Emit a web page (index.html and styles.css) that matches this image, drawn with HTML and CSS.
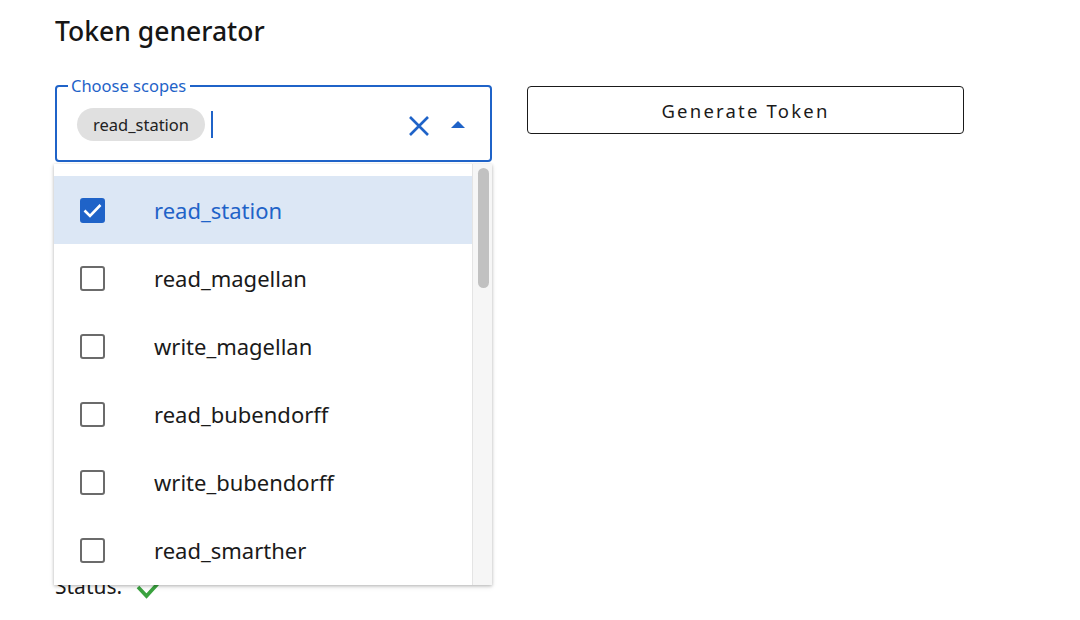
FILE: index.html
```html
<!DOCTYPE html>
<html>
<head>
<meta charset="utf-8">
<link rel="stylesheet" href="styles.css">
</head>
<body>
<div class="page">
  <h1 class="title">Token generator</h1>
  <div class="controls">
    <div class="select">
      <fieldset class="field">
        <legend class="legend">Choose scopes</legend>
        <div class="field-row">
          <span class="chip">read_station</span>
          <span class="caret"></span>
          <span class="spacer"></span>
          <svg class="clear" width="22" height="22" viewBox="0 0 22 22"><path d="M2 2 L20 20 M20 2 L2 20" stroke="#1f63c8" stroke-width="2.6" fill="none"/></svg>
          <svg class="arrow" width="14" height="8" viewBox="0 0 14 8"><path d="M0 7 L7 0 L14 7 Z" fill="#1f63c8"/></svg>
        </div>
      </fieldset>
      <div class="menu">
        <ul class="options">
          <li class="option selected"><span class="box checked"><svg width="25" height="25" viewBox="0 0 25 25"><path d="M4.5 12.5 L10 18 L20.5 7" stroke="#fff" stroke-width="2.6" fill="none"/></svg></span><span class="opt-text">read_station</span></li>
          <li class="option"><span class="box"></span><span class="opt-text">read_magellan</span></li>
          <li class="option"><span class="box"></span><span class="opt-text">write_magellan</span></li>
          <li class="option"><span class="box"></span><span class="opt-text">read_bubendorff</span></li>
          <li class="option"><span class="box"></span><span class="opt-text">write_bubendorff</span></li>
          <li class="option"><span class="box"></span><span class="opt-text">read_smarther</span></li>
        </ul>
        <div class="scrollbar"><div class="thumb"></div></div>
      </div>
    </div>
    <button class="generate">Generate Token</button>
  </div>
  <div class="status">
    <span>Status:</span>
    <svg width="28" height="24" viewBox="0 0 28 24"><path d="M2 11 L10.5 20 L26 3" stroke="#3aa33f" stroke-width="3.6" fill="none"/></svg>
  </div>
</div>
</body>
</html>
```

FILE: styles.css
```css
* { box-sizing: border-box; }
html, body { margin: 0; background: #fff; }
body { font-family: "Noto Sans", "Open Sans", sans-serif; color: #1a1a1a; }
.page { padding: 13px 0 0 55px; }
.title {
  margin: 0;
  font-family: "Noto Sans", sans-serif;
  font-weight: 500;
  font-size: 26.5px;
  line-height: 36px;
  color: #161616;
}
.controls {
  display: flex;
  align-items: flex-start;
  gap: 35px;
  margin-top: 37px;
}
.select { position: relative; width: 437px; }
.field {
  margin: 0;
  padding: 0 22px 0 20px;
  border: 2px solid #1f63c8;
  border-radius: 4px;
  height: 85px;
  margin-top: -9px;
}
.legend {
  margin-left: -9px;
  padding: 0 4px 0 3px;
  font-size: 16.5px;
  line-height: 18px;
  color: #1f63c8;
}
.field-row {
  display: flex;
  align-items: center;
  height: 58px;
}
.chip {
  display: inline-flex;
  align-items: center;
  height: 33px;
  padding: 0 16px;
  background: #e0e0e0;
  border-radius: 17px;
  font-size: 16.5px;
  color: #222;
}
.caret {
  width: 2px;
  height: 27px;
  background: #1f63c8;
  margin-left: 6px;
}
.spacer { flex: 1; }
.clear { margin-right: 21px; margin-top: 3px; }
.arrow { margin-right: 3px; margin-top: 1px; }
.menu {
  position: absolute;
  left: -1px;
  top: 78px;
  width: 438px;
  height: 421px;
  background: #fff;
  box-shadow: 0 1px 3px rgba(0,0,0,0.25), 0 2px 6px rgba(0,0,0,0.08);
  display: flex;
  overflow: hidden;
}
.options {
  list-style: none;
  margin: 0;
  padding: 12px 0 0 0;
  flex: 1;
}
.option {
  display: flex;
  align-items: center;
  height: 68px;
  padding-left: 26px;
  font-size: 22px;
  color: #1a1a1a;
}
.option.selected { background: #dce7f5; color: #1f63c8; }
.box {
  width: 25px;
  height: 25px;
  border: 2px solid #6b6b6b;
  border-radius: 3px;
  margin-right: 49px;
  flex: none;
  display: flex;
}
.box.checked { background: #1f63c8; border-color: #1f63c8; }
.box svg { margin: -2px; }
.scrollbar {
  width: 20px;
  background: #f6f6f6;
  border-left: 1px solid #e4e4e4;
  padding: 4px 3px 0 5px;
}
.thumb {
  height: 120px;
  background: #c1c1c1;
  border-radius: 6px;
}
.generate {
  width: 437px;
  height: 48px;
  background: #fff;
  border: 1px solid #1a1a1a;
  border-radius: 4px;
  font-family: "Noto Sans", sans-serif;
  font-size: 18.5px;
  letter-spacing: 2.2px;
  color: #1a1a1a;
  cursor: pointer;
}
.status {
  display: flex;
  align-items: center;
  gap: 14px;
  margin-top: 410px;
  font-size: 21px;
}
.status svg { margin-top: 4px; }
```
